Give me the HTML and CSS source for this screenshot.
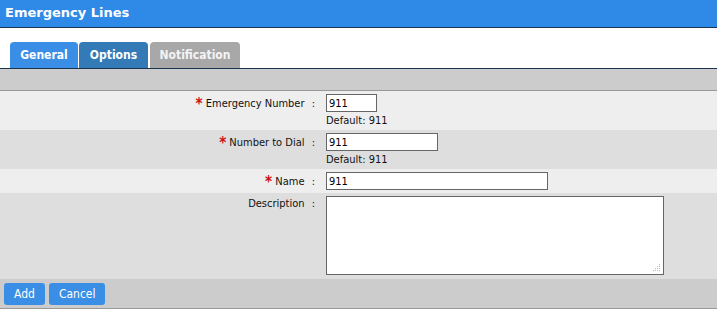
FILE: index.html
```html
<!DOCTYPE html>
<html>
<head>
<title>Emergency Lines</title>
<link rel="stylesheet" href="styles.css">
</head>
<body>
<div class="titlebar">Emergency Lines</div>
<div class="tabs">
	<div class="tab tab-general">General</div>
	<div class="tab tab-options">Options</div>
	<div class="tab tab-notify">Notification</div>
</div>
<div class="band"></div>
<div class="form">
	<div class="row row-light">
		<div class="label"><span class="req">*</span> Emergency Number <span class="colon">:</span></div>
		<div class="field">
			<input class="txt w-short" type="text" value="911">
			<div class="hint">Default: 911</div>
		</div>
	</div>
	<div class="row row-dark">
		<div class="label"><span class="req">*</span> Number to Dial <span class="colon">:</span></div>
		<div class="field">
			<input class="txt w-mid" type="text" value="911">
			<div class="hint">Default: 911</div>
		</div>
	</div>
	<div class="row row-light">
		<div class="label"><span class="req">*</span> Name <span class="colon">:</span></div>
		<div class="field">
			<input class="txt w-long" type="text" value="911">
		</div>
	</div>
	<div class="row row-dark">
		<div class="label">Description <span class="colon">:</span></div>
		<div class="field">
			<div class="desc-wrap">
				<textarea class="desc"></textarea>
				<span class="grip"></span>
			</div>
		</div>
	</div>
</div>
<div class="footer">
	<button class="btn">Add</button>
	<button class="btn">Cancel</button>
</div>
</body>
</html>
```
FILE: styles.css
```css
body {
	margin: 0;
	background-color: #fff;
	font-family: "DejaVu Sans Condensed", "DejaVu Sans", Tahoma, sans-serif;
	font-stretch: condensed;
	font-size: 11px;
	color: #111;
}

.titlebar {
	height: 27px;
	line-height: 26px;
	background-color: #2e8ae6;
	border-bottom: 1px solid #1b3550;
	color: #fff;
	font-family: "DejaVu Sans", Tahoma, sans-serif;
	font-stretch: normal;
	font-weight: bold;
	font-size: 13px;
	padding-left: 5px;
}

.tabs {
	display: flex;
	gap: 1px;
	padding: 14px 0 0 10px;
	border-bottom: 1px solid #1b3550;
}

.tab {
	height: 26px;
	line-height: 26px;
	border-radius: 4px 4px 0 0;
	color: #fff;
	font-weight: bold;
	font-size: 12px;
	text-align: center;
}

.tab-general {
	width: 68px;
	background-color: #3a8ee6;
}

.tab-options {
	width: 69px;
	background-color: #337ab7;
}

.tab-notify {
	width: 90px;
	margin-left: 1px;
	background-color: #a8a8a8;
	color: #f4f4f4;
}

.band {
	height: 21px;
	background-color: #cccccc;
	border-bottom: 1px solid #999;
}

.row {
	display: flex;
	padding: 3px 0;
}

.row-light {
	background-color: #eeeeee;
}

.row-dark {
	background-color: #dedede;
}

.label {
	width: 315px;
	text-align: right;
	line-height: 16px;
	white-space: nowrap;
}

.colon {
	margin-left: 4px;
}

.req {
	position: relative;
	top: 2px;
	color: #d01010;
	font-size: 15px;
	font-weight: bold;
}

.field {
	padding-left: 11px;
}

.txt {
	display: block;
	box-sizing: border-box;
	height: 18px;
	margin: 0;
	padding: 0 2px;
	border: 1px solid #666;
	background: #fff;
	font-family: inherit;
	font-size: 11px;
	color: #000;
	outline: none;
}

.w-short { width: 51px; }
.w-mid { width: 112px; }
.w-long { width: 222px; }

.hint {
	height: 15px;
	line-height: 17px;
}

.desc-wrap {
	position: relative;
	margin-bottom: 1px;
}

.desc {
	display: block;
	box-sizing: border-box;
	width: 338px;
	height: 79px;
	margin: 0;
	border: 1px solid #666;
	background: #fff;
	resize: none;
	outline: none;
}

.grip {
	position: absolute;
	right: 4px;
	bottom: 4px;
	width: 7px;
	height: 7px;
	background:
		linear-gradient(#bbb, #bbb) 6px 0 / 1px 1px no-repeat,
		linear-gradient(#bbb, #bbb) 4px 2px / 1px 1px no-repeat,
		linear-gradient(#bbb, #bbb) 6px 2px / 1px 1px no-repeat,
		linear-gradient(#bbb, #bbb) 2px 4px / 1px 1px no-repeat,
		linear-gradient(#bbb, #bbb) 4px 4px / 1px 1px no-repeat,
		linear-gradient(#bbb, #bbb) 6px 4px / 1px 1px no-repeat,
		linear-gradient(#bbb, #bbb) 0 6px / 1px 1px no-repeat,
		linear-gradient(#bbb, #bbb) 2px 6px / 1px 1px no-repeat,
		linear-gradient(#bbb, #bbb) 4px 6px / 1px 1px no-repeat,
		linear-gradient(#bbb, #bbb) 6px 6px / 1px 1px no-repeat;
}

.footer {
	display: flex;
	gap: 4px;
	padding: 4px 4px 3px;
	height: 22px;
	background-color: #cccccc;
	border-bottom: 1px solid #999;
}

.btn {
	height: 22px;
	padding: 0 10px;
	border: none;
	border-radius: 3px;
	background-color: #3a8ee6;
	color: #fff;
	font-family: inherit;
	font-size: 12px;
}
```
